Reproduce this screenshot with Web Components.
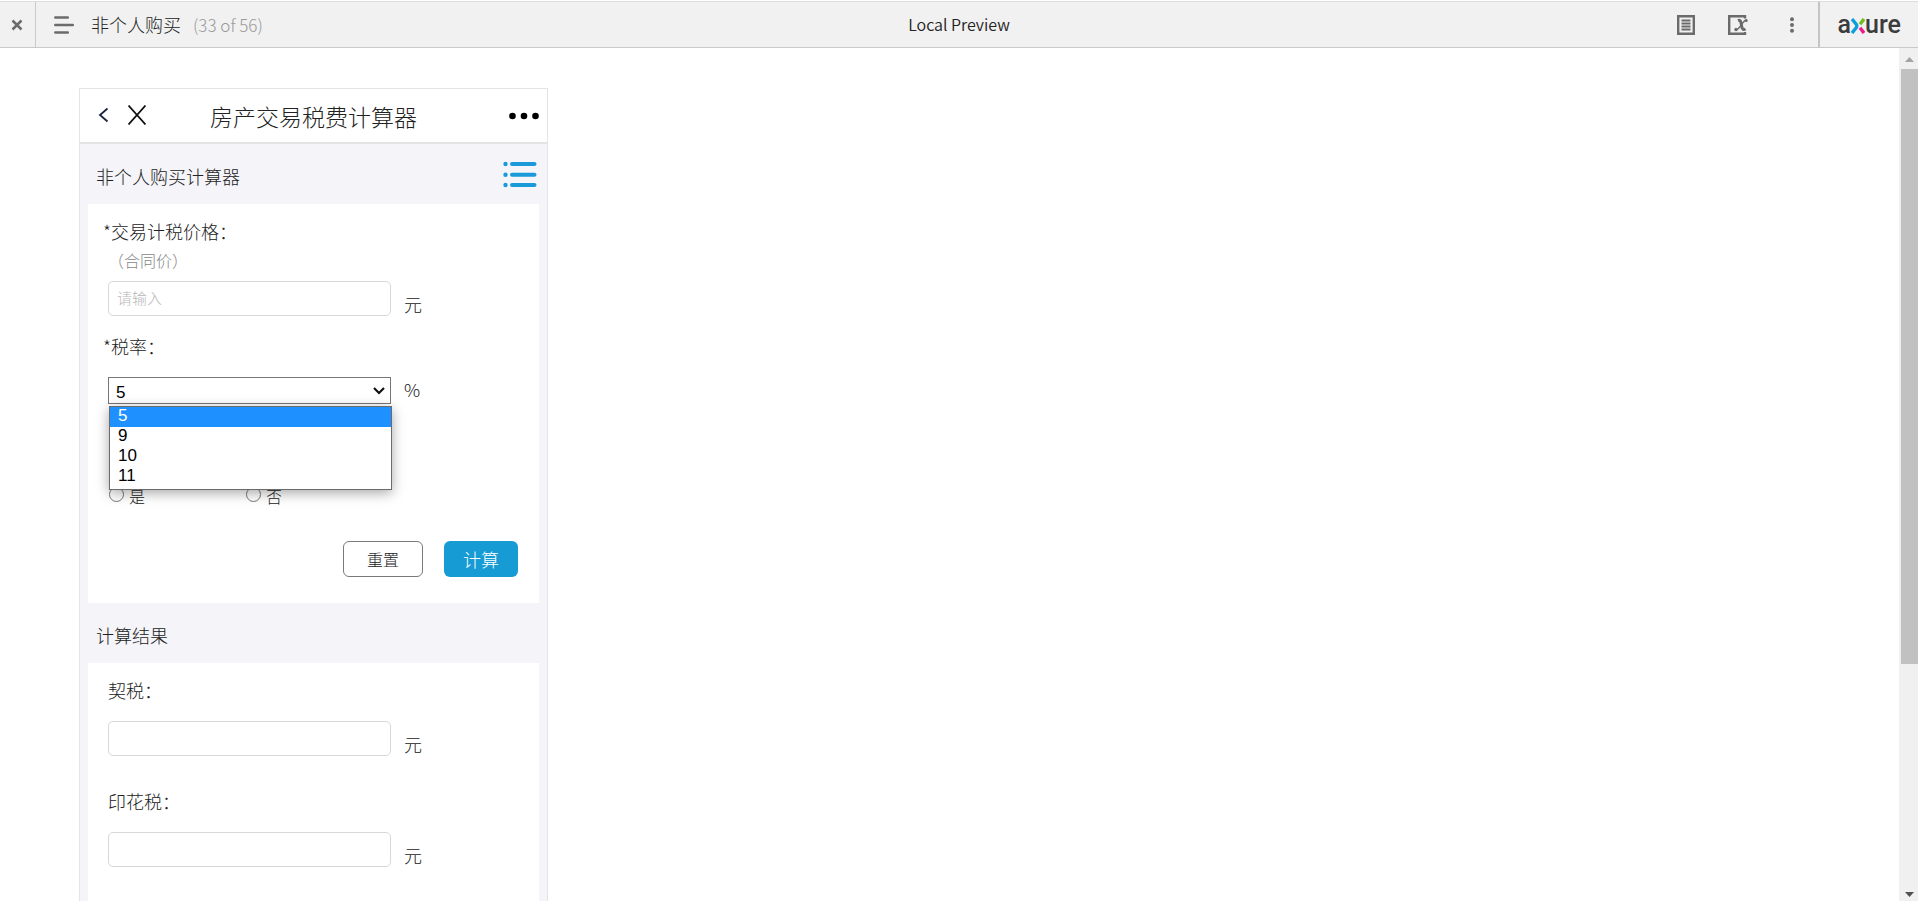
<!DOCTYPE html>
<html lang="zh-CN">
<head>
<meta charset="utf-8">
<title>非个人购买</title>
<style>
html, body { height: 100%; }
body { margin: 0; background: #fff; color: #222; font-family: "Noto Sans CJK SC", "Noto Sans", sans-serif; font-weight: 300; font-size: 18px; overflow: hidden; }
</style>
</head>
<body>
<preview-app></preview-app>
<script>
function define(name, html, setup) {
  const tpl = document.createElement('template');
  tpl.innerHTML = html;
  customElements.define(name, class extends HTMLElement {
    constructor() {
      super();
      this.attachShadow({ mode: 'open' }).append(tpl.content.cloneNode(true));
    }
    connectedCallback() { if (setup) setup(this, this.shadowRoot); }
  });
}
const buttonReset = 'button{border:0;background:none;padding:0;margin:0;font:inherit;color:inherit;cursor:pointer}svg{display:block}';

define('axure-logo', `
<style>
:host { display: flex; align-items: center; font: 500 25px/36px Roboto, sans-serif; color: #3c3c3c; }
svg { display: block; margin-top: 3px; }
</style>
<span>a</span>
<svg width="14" height="16" viewBox="0 0 14 16" fill="none" stroke-width="3.400">
  <path d="M1 1 5.200 6.300Q6.400 8 5.200 9.700L1 15" stroke="#0c9fdd"/>
  <path d="M13 1 9 6.200" stroke="#6fbe1f"/>
  <path d="M13 15 9 9.800" stroke="#ec1a8d"/>
</svg>
<span>ure</span>`);

define('preview-bar', `
<style>
${buttonReset}
:host { display: grid; grid-template-columns: 1fr auto 1fr; align-items: stretch; height: 47px; margin-top: 1px; background: #f1f1f1; border-top: 1px solid #dcdcdc; border-bottom: 1px solid #c9c9c9; box-sizing: border-box; }
.left, .right { display: flex; align-items: center; }
.close { width: 35px; height: 100%; border-right: 1px solid #c9c9c9; box-sizing: content-box; display: flex; align-items: center; justify-content: center; }
.close svg { margin-right: 2px; }
.menu { margin: 0 17px 0 18px; }
h1 { margin: 0; font-size: 18px; font-weight: 300; line-height: 24px; padding-bottom: 2px; }
.count { margin-left: 12px; font-size: 17px; line-height: 24px; color: #999; }
.center { align-self: center; font-size: 16px; line-height: 24px; padding-bottom: 2px; font-weight: 350; }
.right { justify-content: flex-end; }
.doc { margin-right: 33px; } .var { margin-right: 42px; } .more { margin-right: 24px; }
axure-logo { border-left: 2px solid #c4c4c4; height: 100%; padding: 0 17px 0 18px; }
</style>
<div class="left">
  <button class="close" aria-label="Close"><svg width="12" height="12" viewBox="0 0 12 12" stroke="#6b6b6b" stroke-width="2.500"><path d="M1.500 1.500l9 9M10.500 1.500l-9 9"/></svg></button>
  <button class="menu" aria-label="Pages"><svg width="20" height="18" viewBox="0 0 20 18" stroke="#6b6b6b" stroke-width="2.500" stroke-linecap="round"><path d="M1.300 1.500h12.500M1.300 9h17.500M1.300 16.500h12.500"/></svg></button>
  <h1>非个人购买</h1><span class="count">(33 of 56)</span>
</div>
<div class="center">Local Preview</div>
<div class="right">
  <button class="doc" aria-label="Documentation"><svg width="18" height="20" viewBox="0 0 18 20" fill="none" stroke="#6b6b6b" stroke-width="2"><path stroke-width="2.400" d="M1.200 1.200h15.600v17.600H1.200z"/><path d="M4.500 5.500h9M4.500 8.500h9M4.500 11.500h9M4.500 14.500h9"/></svg></button>
  <button class="var" aria-label="Variables"><svg width="20" height="20" viewBox="0 0 20 20" fill="none" stroke="#6b6b6b"><path stroke-width="2.400" d="M17 3.500V1.200H1.200v17.600H17V17"/><path stroke-width="3" d="M10 5.500c3-1 3 2 3.500 5s1.500 5 4 3.500"/><path stroke-width="1.500" d="M19 5c-4-1-7 10-11 10"/><circle cx="18.300" cy="5.700" r="1.400" fill="#6b6b6b" stroke="none"/><circle cx="8" cy="14.500" r="1.700" fill="#6b6b6b" stroke="none"/></svg></button>
  <button class="more" aria-label="More"><svg width="4" height="16" viewBox="0 0 4 16" fill="#6b6b6b"><circle cx="2" cy="2.300" r="2"/><circle cx="2" cy="8" r="2"/><circle cx="2" cy="13.700" r="2"/></svg></button>
  <axure-logo></axure-logo>
</div>`);

define('scroll-track', `
<style>
:host { display: flex; flex-direction: column; align-items: center; width: 17px; padding-left: 2px; background: #f0f0f0; flex: none; }
svg { display: block; flex: none; }
.rail { flex: 1; width: 100%; }
.thumb { height: 73%; background: #c1c1c1; }
</style>
<svg width="17" height="21" viewBox="0 0 17 21"><path d="M4 14h9L8.500 9z" fill="#a3a3a3"/></svg>
<div class="rail"><div class="thumb"></div></div>
<svg width="17" height="17" viewBox="0 0 17 17"><path d="M4 8h9l-4.500 5z" fill="#505050"/></svg>`);

define('phone-header', `
<style>
${buttonReset}
:host { display: grid; grid-template-columns: 1fr auto 1fr; align-items: center; height: 53px; border-bottom: 2px solid #e4e4e4; background: #fff; padding: 0 8px; }
.nav { display: flex; align-items: center; gap: 19px; padding: 0 0 2px 10px; }
h2 { margin: 0; font-size: 23px; line-height: 32px; font-weight: 300; }
.more { justify-self: end; }
</style>
<div class="nav">
  <button aria-label="返回"><svg width="11" height="16" viewBox="0 0 11 16" fill="none" stroke="#1b2440" stroke-width="1.800"><path d="M9.500 1.500 2 8l7.500 6.500"/></svg></button>
  <button aria-label="关闭"><svg width="18" height="20" viewBox="0 0 18 20" stroke="#111" stroke-width="1.800"><path d="M.5.5l17 19M17.500.5l-17 19"/></svg></button>
</div>
<h2>房产交易税费计算器</h2>
<button class="more" aria-label="更多"><svg width="30" height="8" viewBox="0 0 30 8"><circle cx="3.500" cy="4" r="3.300"/><circle cx="15" cy="4" r="3.300"/><circle cx="26.500" cy="4" r="3.300"/></svg></button>`);

define('section-title', `
<style>
:host { display: flex; align-items: center; justify-content: space-between; height: 56px; padding: 4px 10px 0 16px; flex: none; }
h3 { margin: 0; font-size: 18px; line-height: 24px; font-weight: 300; }
</style>
<h3><slot></slot></h3><slot name="action"></slot>`);

define('list-button', `
<style>${buttonReset} :host { display: block; padding-top: 3px; }</style>
<button aria-label="列表"><svg width="34" height="28" viewBox="0 0 34 28" stroke="#1a9ad9" fill="#1a9ad9" stroke-width="4" stroke-linecap="round"><path d="M9 3h22.500M9 13.700h22.500M9 24h22.500"/><g stroke="none"><circle cx="2.500" cy="3" r="2.200"/><circle cx="2.500" cy="13.700" r="2.200"/><circle cx="2.500" cy="24" r="2.200"/></g></svg></button>`);

define('panel-card', `
<style>:host { display: block; margin: 0 8px; padding: 15px 21px 26px 15px; background: #fff; }</style>
<slot></slot>`);

define('form-field', `
<style>
:host { display: block; }
label { display: block; padding-left: 5px; line-height: 24px; }
:host([required]) label { padding-left: 0; }
.hint { display: block; padding: 5px 0 0 5px; margin-bottom: -10px; font-size: 16px; line-height: 24px; color: #888; }
.hint:empty { display: none; }
.row { display: flex; align-items: flex-end; gap: 13px; padding-left: 5px; margin-top: 19px; }
input { width: 283px; height: 35px; box-sizing: border-box; border: 1px solid #d7d7d7; border-radius: 5px; padding: 0 8px 2px; font: inherit; font-size: 15px; color: #333; background: #fff; outline: 0; }
input::placeholder { color: #b8b8b8; opacity: 1; }
.unit { line-height: 24px; }
</style>
<label for="value"></label><span class="hint" id="hint"></span>
<div class="row"><input id="value" type="text" aria-describedby="hint"><span class="unit"></span></div>`,
(host, root) => {
  const a = n => host.getAttribute(n) || '';
  root.querySelector('label').textContent = (host.hasAttribute('required') ? '*' : '') + a('label');
  root.querySelector('.hint').textContent = a('hint');
  root.querySelector('input').placeholder = a('placeholder');
  root.querySelector('.unit').textContent = a('unit');
});

define('rate-select', `
<style>
:host { display: block; }
label { display: block; line-height: 24px; }
.row { display: flex; align-items: flex-end; gap: 13px; padding-left: 5px; margin-top: 19px; }
.box { position: relative; width: 283px; font: 400 17px/18px "Liberation Sans", Arial, sans-serif; color: #000; }
select { display: block; width: 100%; height: 27px; box-sizing: border-box; appearance: none; border: 1px solid #767676; border-radius: 0; background: #fff; font: inherit; color: #000; padding: 5px 7px 0; outline: 0; }
.arrow { position: absolute; right: 6px; top: 10px; pointer-events: none; }
ul { position: absolute; z-index: 2; left: 1px; top: 29px; width: 100%; box-sizing: border-box; margin: 0; padding: 0 0 2px; list-style: none; border: 1px solid #6b6b6b; background: #fff; box-shadow: 0 3px 12px rgba(0,0,0,.35); }
li { padding: 0 8px 2px; }
li[aria-selected=true] { background: #1e90ff; color: #fff; }
.unit { height: 27px; line-height: 24px; }
</style>
<label for="rate">*税率：</label>
<div class="row">
  <div class="box">
    <select id="rate"><option>5</option><option>9</option><option>10</option><option>11</option></select>
    <svg class="arrow" width="12" height="8" viewBox="0 0 12 8" fill="none" stroke="#111" stroke-width="2.200"><path d="M1 1l5 5 5-5"/></svg>
    <ul role="listbox" aria-label="税率"><li role="option" aria-selected="true">5</li><li role="option">9</li><li role="option">10</li><li role="option">11</li></ul>
  </div>
  <span class="unit">%</span>
</div>`);

define('yes-no', `
<style>
:host { display: flex; line-height: 24px; font-size: 16px; padding-left: 5px; }
label { display: flex; align-items: center; gap: 5px; width: 137px; height: 24px; }
input { appearance: none; width: 15px; height: 15px; box-sizing: border-box; margin: 0 0 4px 1px; border: 1px solid #767676; border-radius: 50%; background: #fff; }
</style>
<label><input type="radio" name="choice"><span>是</span></label>
<label><input type="radio" name="choice"><span>否</span></label>`);

define('push-button', `
<style>
:host { display: block; }
button { display: block; height: 36px; width: 80px; padding: 0; box-sizing: border-box; border: 1px solid #797979; border-radius: 6px; background: #fff; color: inherit; font: inherit; font-size: 16px; cursor: pointer; }
:host([primary]) button { width: 74px; border: 0; background: #169bd5; color: #fff; font-size: 18px; }
</style>
<button type="button"><slot></slot></button>`);

define('tax-calculator', `
<style>
:host { display: flex; flex-direction: column; width: 467px; border: 1px solid #e4e4e4; background: #f4f4f9; }
.rate { margin-top: 18px; }
yes-no { margin-top: 80px; }
.actions { display: flex; justify-content: flex-end; gap: 21px; margin-top: 33px; }
.next { margin-top: 33px; }
.results { flex: 1; }
</style>
<phone-header></phone-header>
<section-title>非个人购买计算器<list-button slot="action"></list-button></section-title>
<panel-card>
  <form-field required label="交易计税价格：" hint="（合同价）" placeholder="请输入" unit="元"></form-field>
  <rate-select class="rate"></rate-select>
  <yes-no></yes-no>
  <div class="actions"><push-button>重置</push-button><push-button primary>计算</push-button></div>
</panel-card>
<section-title>计算结果</section-title>
<panel-card class="results">
  <form-field label="契税：" unit="元"></form-field>
  <form-field class="next" label="印花税：" unit="元"></form-field>
</panel-card>`);

define('preview-app', `
<style>
:host { display: flex; flex-direction: column; height: 100vh; overflow: hidden; }
preview-bar { flex: none; }
.body { display: flex; flex: 1; min-height: 0; }
main { flex: 1; min-width: 0; overflow: hidden; padding: 40px 0 0 79px; }
tax-calculator { min-height: 100%; }
</style>
<preview-bar></preview-bar>
<div class="body"><main><tax-calculator></tax-calculator></main><scroll-track></scroll-track></div>`);
</script>
</body>
</html>
